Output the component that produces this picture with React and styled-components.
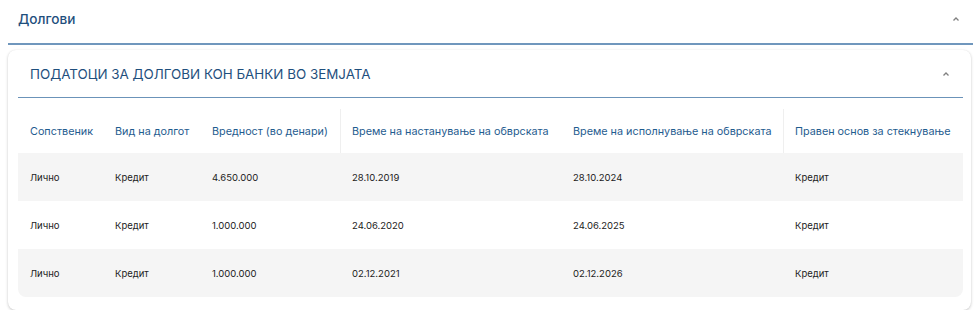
import React from "react"
import { styled, createGlobalStyle } from "styled-components"

const rows = [
  ["Лично", "Кредит", "4.650.000", "28.10.2019", "28.10.2024", "Кредит"],
  ["Лично", "Кредит", "1.000.000", "24.06.2020", "24.06.2025", "Кредит"],
  ["Лично", "Кредит", "1.000.000", "02.12.2021", "02.12.2026", "Кредит"],
]

const columns = [
  "Сопственик",
  "Вид на долгот",
  "Вредност (во денари)",
  "Време на настанување на обврската",
  "Време на исполнување на обврската",
  "Правен основ за стекнување",
]

function Caret() {
  return (
    <CaretIcon viewBox="0 0 8 6" aria-hidden="true">
      <polyline points="1.5,4.5 4,2 6.5,4.5" />
    </CaretIcon>
  )
}

export default function App() {
  return (
    <>
      <GlobalStyle />
      <Page>
        <SectionHeader>
          <SectionTitle>Долгови</SectionTitle>
          <Caret />
        </SectionHeader>
        <Card>
          <CardHeader>
            <CardTitle>Податоци за долгови кон банки во земјата</CardTitle>
            <Caret />
          </CardHeader>
          <Table>
            <HeadRow>
              {columns.map((c, i) => (
                <HeadCell key={c} $divider={i === 3 || i === 5}>{c}</HeadCell>
              ))}
            </HeadRow>
            {rows.map((r, i) => (
              <BodyRow key={i} $striped={i % 2 === 0}>
                {r.map((v, j) => (
                  <Cell key={j}>{v}</Cell>
                ))}
              </BodyRow>
            ))}
          </Table>
        </Card>
      </Page>
    </>
  )
}

const GlobalStyle = createGlobalStyle`
  body {
    margin: 0;
    background: #ffffff;
    font-family: Inter, "Noto Sans", sans-serif;
  }
`

const Page = styled.div`
  padding: 0 7px 0 8px;
`

const SectionHeader = styled.div`
  height: 45px;
  display: flex;
  align-items: center;
  justify-content: space-between;
  padding: 0 13px 6px 10px;
  box-sizing: border-box;
  border-bottom: 2px solid #7097bd;
`

const SectionTitle = styled.div`
  font-size: 13.6px;
  font-weight: 500;
  color: #1f4f7d;
`

const CaretIcon = styled.svg`
  width: 8px;
  height: 6px;
  fill: none;
  stroke: #808080;
  stroke-width: 1.3;
`

const Card = styled.div`
  margin: 5px 2px 0 0;
  padding: 0 8px 13px 10px;
  border-radius: 8px;
  background: #ffffff;
  box-shadow: 0 1px 3px rgba(0, 0, 0, 0.22), 0 0 1px rgba(0, 0, 0, 0.06);
`

const CardHeader = styled.div`
  height: 48px;
  display: flex;
  align-items: center;
  justify-content: space-between;
  padding: 0 13px 0 12px;
  box-sizing: border-box;
  border-bottom: 1.5px solid #6b93b9;
`

const CardTitle = styled.div`
  font-size: 13.4px;
  font-weight: 400;
  text-transform: uppercase;
  color: #1f4f7d;
`

const Table = styled.div`
  margin-top: 6px;
`

const grid = `
  display: grid;
  grid-template-columns: 85px 97px 140px 221px 222px 1fr;
  height: 48px;
`

const HeadRow = styled.div`
  ${grid}
  height: 49px;
`

const HeadCell = styled.div`
  display: flex;
  align-items: center;
  padding: 6px 12px 0;
  font-size: 10.8px;
  color: #1f5c8f;
  white-space: nowrap;
  position: relative;

  &::before {
    content: "";
    display: ${(p) => (p.$divider ? "block" : "none")};
    position: absolute;
    left: 0;
    top: 5px;
    bottom: 0;
    border-left: 1px solid #efefef;
  }
`

const BodyRow = styled.div`
  ${grid}
  background: ${(p) => (p.$striped ? "#f5f5f5" : "#ffffff")};

  &:last-child {
    border-radius: 0 0 8px 8px;
  }
`

const Cell = styled.div`
  display: flex;
  align-items: center;
  padding: 0 12px;
  font-size: 9.5px;
  color: #1c1c1c;
  white-space: nowrap;
`
